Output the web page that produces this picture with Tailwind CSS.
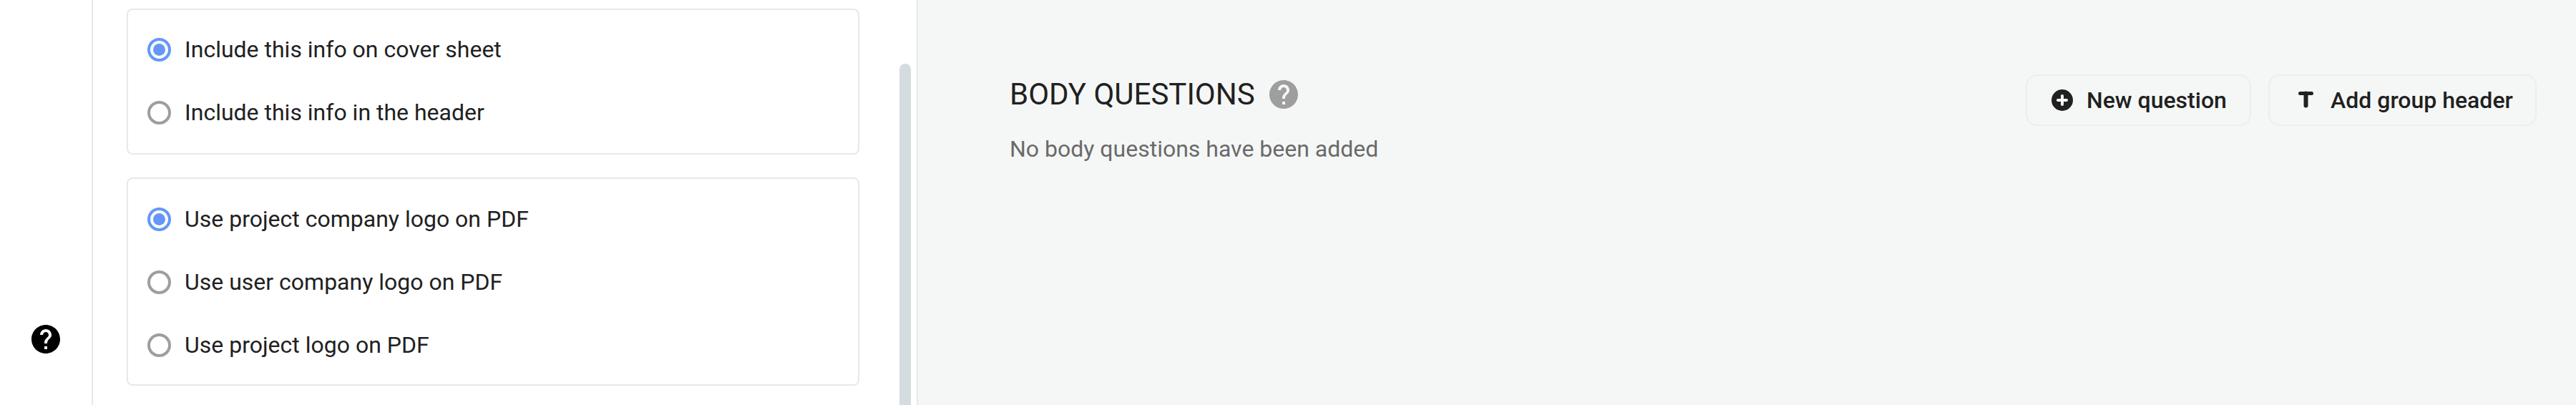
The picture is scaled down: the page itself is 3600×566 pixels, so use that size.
<!doctype html>
<html><head><meta charset="utf-8"><script src="https://cdn.jsdelivr.net/npm/@tailwindcss/browser@4"></script></head>
<body class="bg-white">
<div class="flex w-[3600px] h-[566px] overflow-hidden font-['Roboto',sans-serif] text-[32px] leading-[40px] text-[#212121]">
  <aside class="w-[130px] shrink-0 border-r-2 border-[#e8e8ec] flex flex-col items-start pl-[40px] pt-[450px]">
    <svg class="w-12 h-12" viewBox="0 0 24 24"><path fill="#000" d="M12 2C6.48 2 2 6.48 2 12s4.48 10 10 10 10-4.48 10-10S17.52 2 12 2zm1 17h-2v-2h2v2zm2.07-7.75l-.9.92C13.45 12.9 13 13.5 13 15h-2v-.5c0-1.1.45-2.1 1.17-2.83l1.24-1.26c.37-.36.59-.86.59-1.41 0-1.1-.9-2-2-2s-2 .9-2 2H8c0-2.21 1.79-4 4-4s4 1.79 4 4c0 .88-.36 1.68-.93 2.25z"/></svg>
  </aside>
  <section class="relative w-[1153px] shrink-0 border-r-2 border-[#e8e8ec] pl-[47px] pt-[12px]">
    <div class="w-[1024px] h-[204px] border-2 border-[#e8e8ec] rounded-lg flex flex-col pt-[11px] pl-[27px]">
      <label class="h-[88px] flex items-center gap-[19px]"><span class="w-[33px] h-[33px] rounded-full border-4 border-[#6497f8] flex items-center justify-center"><span class="w-[17px] h-[17px] rounded-full bg-[#6497f8]"></span></span>Include this info on cover sheet</label>
      <label class="h-[88px] flex items-center gap-[19px]"><span class="w-[33px] h-[33px] rounded-full border-4 border-[#9e9e9e]"></span>Include this info in the header</label>
    </div>
    <div class="w-[1024px] h-[291px] mt-[32px] border-2 border-[#e8e8ec] rounded-lg flex flex-col pt-[12px] pl-[27px]">
      <label class="h-[88px] flex items-center gap-[19px]"><span class="w-[33px] h-[33px] rounded-full border-4 border-[#6497f8] flex items-center justify-center"><span class="w-[17px] h-[17px] rounded-full bg-[#6497f8]"></span></span>Use project company logo on PDF</label>
      <label class="h-[88px] flex items-center gap-[19px]"><span class="w-[33px] h-[33px] rounded-full border-4 border-[#9e9e9e]"></span>Use user company logo on PDF</label>
      <label class="h-[88px] flex items-center gap-[19px]"><span class="w-[33px] h-[33px] rounded-full border-4 border-[#9e9e9e]"></span>Use project logo on PDF</label>
    </div>
    <div class="absolute left-[1127px] top-[89px] w-4 h-[477px] rounded-t-lg bg-[#d5dcdf]"></div>
  </section>
  <main class="flex-1 bg-[#f5f7f6] flex justify-between pl-[128px] pr-[55px]">
    <div class="pt-[112px]">
      <div class="flex items-center gap-[16px] h-10 text-[42px] leading-10"><span>BODY QUESTIONS</span>
        <svg class="w-12 h-12" viewBox="0 0 24 24"><path fill="#9e9e9e" d="M12 2C6.48 2 2 6.48 2 12s4.48 10 10 10 10-4.48 10-10S17.52 2 12 2zm1 17h-2v-2h2v2zm2.07-7.75l-.9.92C13.45 12.9 13 13.5 13 15h-2v-.5c0-1.1.45-2.1 1.17-2.83l1.24-1.26c.37-.36.59-.86.59-1.41 0-1.1-.9-2-2-2s-2 .9-2 2H8c0-2.21 1.79-4 4-4s4 1.79 4 4c0 .88-.36 1.68-.93 2.25z"/></svg>
      </div>
      <p class="mt-[36px] text-[#6a6a6a]">No body questions have been added</p>
    </div>
    <div class="flex gap-6 pt-[104px] font-medium">
      <button class="h-[72px] w-[315px] border-2 border-[#ebedf0] rounded-[16px] flex items-center pl-[34px] gap-[19px]">
        <svg class="w-[30px] h-[30px]" viewBox="0 0 30 30"><circle cx="15" cy="15" r="15" fill="#212121"/><path d="M15 9v12M9 15h12" stroke="#fff" stroke-width="4" stroke-linecap="round"/></svg>New question</button>
      <button class="h-[72px] w-[375px] border-2 border-[#ebedf0] rounded-[16px] flex items-center pl-[34px] gap-[19px]">
        <svg class="w-8 h-8" viewBox="0 0 32 32"><path d="M8.5 6.5h16" fill="none" stroke="#212121" stroke-width="5" stroke-linecap="round"/><path d="M16.5 6.5v17" fill="none" stroke="#212121" stroke-width="6" stroke-linecap="round"/></svg>Add group header</button>
    </div>
  </main>
</div>
</body></html>
